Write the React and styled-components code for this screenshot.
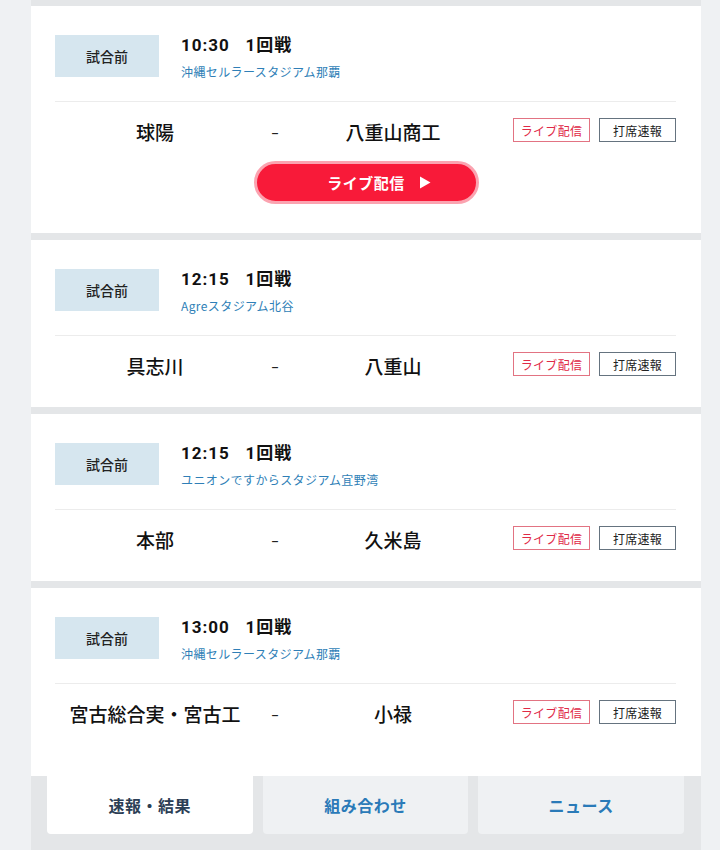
import React from "react";
import styled, { createGlobalStyle } from "styled-components";

const Global = createGlobalStyle`
  html, body { margin: 0; padding: 0; background: #eff1f3; }
  body { font-family: "Noto Sans", "Noto Sans CJK JP", sans-serif; color: #222; }
`;

const Column = styled.div`
  width: 670px;
  margin: 0 19px 0 31px;
  background: #e4e6e8;
  padding-top: 6px;
  min-height: 844px;
`;

const Card = styled.section`
  background: #fff;
  padding: 29px 25px ${(p) => p.$bottom}px 24px;
  margin-bottom: ${(p) => p.$gap}px;
`;

const Header = styled.div`
  display: flex;
  align-items: flex-start;
  gap: 22px;
  height: 42px;
`;

const Status = styled.div`
  width: 104px;
  height: 42px;
  background: #d6e6ef;
  display: flex;
  align-items: center;
  justify-content: center;
  font-family: "Noto Sans CJK JP", sans-serif;
  font-size: 14px;
  font-weight: 500;
  color: #222;
`;

const Info = styled.div`
  display: flex;
  flex-direction: column;
`;

const Time = styled.div`
  font-family: Roboto, "Noto Sans CJK JP", sans-serif;
  font-size: 17px;
  font-weight: 700;
  line-height: 20px;
  letter-spacing: 1px;
  color: #111;
  white-space: pre;
`;

const Stadium = styled.div`
  margin-top: 9px;
  font-family: "Noto Sans CJK JP", sans-serif;
  font-size: 12px;
  line-height: 16px;
  letter-spacing: 0.4px;
  color: #2f7fb7;
`;

const Divider = styled.hr`
  border: none;
  height: 1px;
  background: #ececec;
  margin: 24px 0 0;
`;

const Row = styled.div`
  display: flex;
  align-items: flex-start;
  height: 24px;
  padding-top: 16px;
`;

const Team = styled.div`
  width: ${(p) => p.$w}px;
  text-align: center;
  font-family: "Noto Sans CJK JP", sans-serif;
  font-size: 19px;
  font-weight: 500;
  color: #111;
  line-height: 28px;
  white-space: nowrap;
`;

const Dash = styled.div`
  width: 40px;
  text-align: center;
  font-size: 14px;
  line-height: 30px;
  color: #222;
`;

const Chips = styled.div`
  margin-left: auto;
  display: flex;
  gap: 9px;
`;

const Chip = styled.div`
  box-sizing: border-box;
  width: ${(p) => p.$w}px;
  height: 24px;
  display: flex;
  align-items: center;
  justify-content: center;
  border: 1px solid ${(p) => (p.$live ? "#e27382" : "#65737f")};
  color: ${(p) => (p.$live ? "#df2a47" : "#222")};
  font-family: "Noto Sans CJK JP", sans-serif;
  font-size: 12px;
  letter-spacing: 0.3px;
`;

const LiveWrap = styled.div`
  display: flex;
  justify-content: center;
  padding-top: 19px;
  padding-left: 1px;
`;

const LiveButton = styled.div`
  box-sizing: border-box;
  width: 225px;
  height: 43px;
  border-radius: 22px;
  background: #f81a39;
  border: 3px solid #fba3b0;
  display: flex;
  align-items: center;
  justify-content: center;
  gap: 14px;
  padding-left: 26px;
  color: #fff;
  font-family: "Noto Sans CJK JP", sans-serif;
  font-size: 15px;
  font-weight: 700;
  letter-spacing: 0.5px;
`;

const Tabs = styled.nav`
  display: flex;
  gap: 10px;
  padding: 0 17px 16px 16px;
`;

const Tab = styled.div`
  flex: 1;
  height: 58px;
  display: flex;
  align-items: center;
  justify-content: center;
  background: ${(p) => (p.$active ? "#fff" : "#eff1f3")};
  color: ${(p) => (p.$active ? "#2c3e55" : "#2a7ab8")};
  border-radius: 0 0 4px 4px;
  font-family: "Noto Sans CJK JP", sans-serif;
  font-size: 16px;
  font-weight: 700;
  letter-spacing: 0.5px;
`;

const Arrow = () => (
  <svg width="12" height="13" viewBox="0 0 12 13">
    <path d="M1 0.5 L11.5 6.5 L1 12.5 Z" fill="#fff" />
  </svg>
);

const games = [
  { time: "10:30", stadium: "沖縄セルラースタジアム那覇", home: "球陽", away: "八重山商工", live: true, bottom: 29, gap: 7 },
  { time: "12:15", stadium: "Agreスタジアム北谷", home: "具志川", away: "八重山", bottom: 31, gap: 7 },
  { time: "12:15", stadium: "ユニオンですからスタジアム宜野湾", home: "本部", away: "久米島", bottom: 31, gap: 7 },
  { time: "13:00", stadium: "沖縄セルラースタジアム那覇", home: "宮古総合実・宮古工", away: "小禄", bottom: 52, gap: 0 },
];

export default function App() {
  return (
    <>
      <Global />
      <Column>
        {games.map((g, i) => (
          <Card key={i} $bottom={g.bottom} $gap={g.gap}>
            <Header>
              <Status>試合前</Status>
              <Info>
                <Time>{g.time + "   1回戦"}</Time>
                <Stadium>{g.stadium}</Stadium>
              </Info>
            </Header>
            <Divider />
            <Row>
              <Team $w={200}>{g.home}</Team>
              <Dash>–</Dash>
              <Team $w={196}>{g.away}</Team>
              <Chips>
                <Chip $live $w={77}>ライブ配信</Chip>
                <Chip $w={77}>打席速報</Chip>
              </Chips>
            </Row>
            {g.live && (
              <LiveWrap>
                <LiveButton>
                  <span>ライブ配信</span>
                  <Arrow />
                </LiveButton>
              </LiveWrap>
            )}
          </Card>
        ))}
        <Tabs>
          <Tab $active>速報・結果</Tab>
          <Tab>組み合わせ</Tab>
          <Tab>ニュース</Tab>
        </Tabs>
      </Column>
    </>
  );
}
